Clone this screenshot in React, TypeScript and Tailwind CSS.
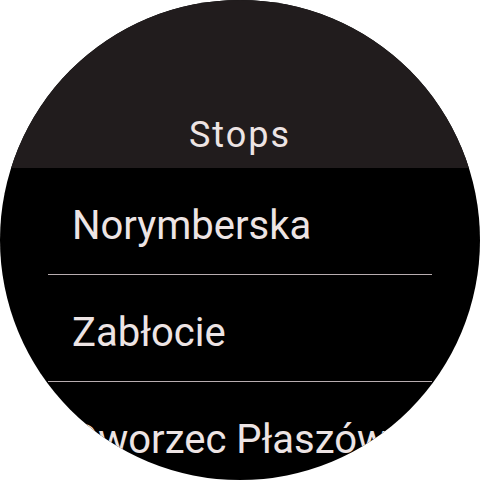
const stops = ["Norymberska", "Zabłocie", "Dworzec Płaszów"];

export default function App() {
  return (
    <div className="w-[480px] h-[480px] bg-white">
      <div
        className="w-[480px] h-[480px] rounded-full overflow-hidden bg-black"
        style={{ fontFamily: "Roboto, 'Noto Sans', sans-serif" }}
      >
        {/* header */}
        <div className="h-[168px] bg-[#211c1d] flex justify-center pt-[117px]">
          <h1 className="text-[36px] leading-[36px] tracking-[2px] text-[#ede4e4]">
            Stops
          </h1>
        </div>

        {/* list */}
        <ul className="px-12">
          {stops.map((name, i) => (
            <li
              key={name}
              className={
                "pl-[24px] pt-[38px] pb-[28px] text-[40px] leading-[40px] text-[#ede4e4] whitespace-nowrap " +
                (i < stops.length - 1 ? "border-b border-[#b8adb0]" : "")
              }
            >
              {name}
            </li>
          ))}
        </ul>
      </div>
    </div>
  );
}
